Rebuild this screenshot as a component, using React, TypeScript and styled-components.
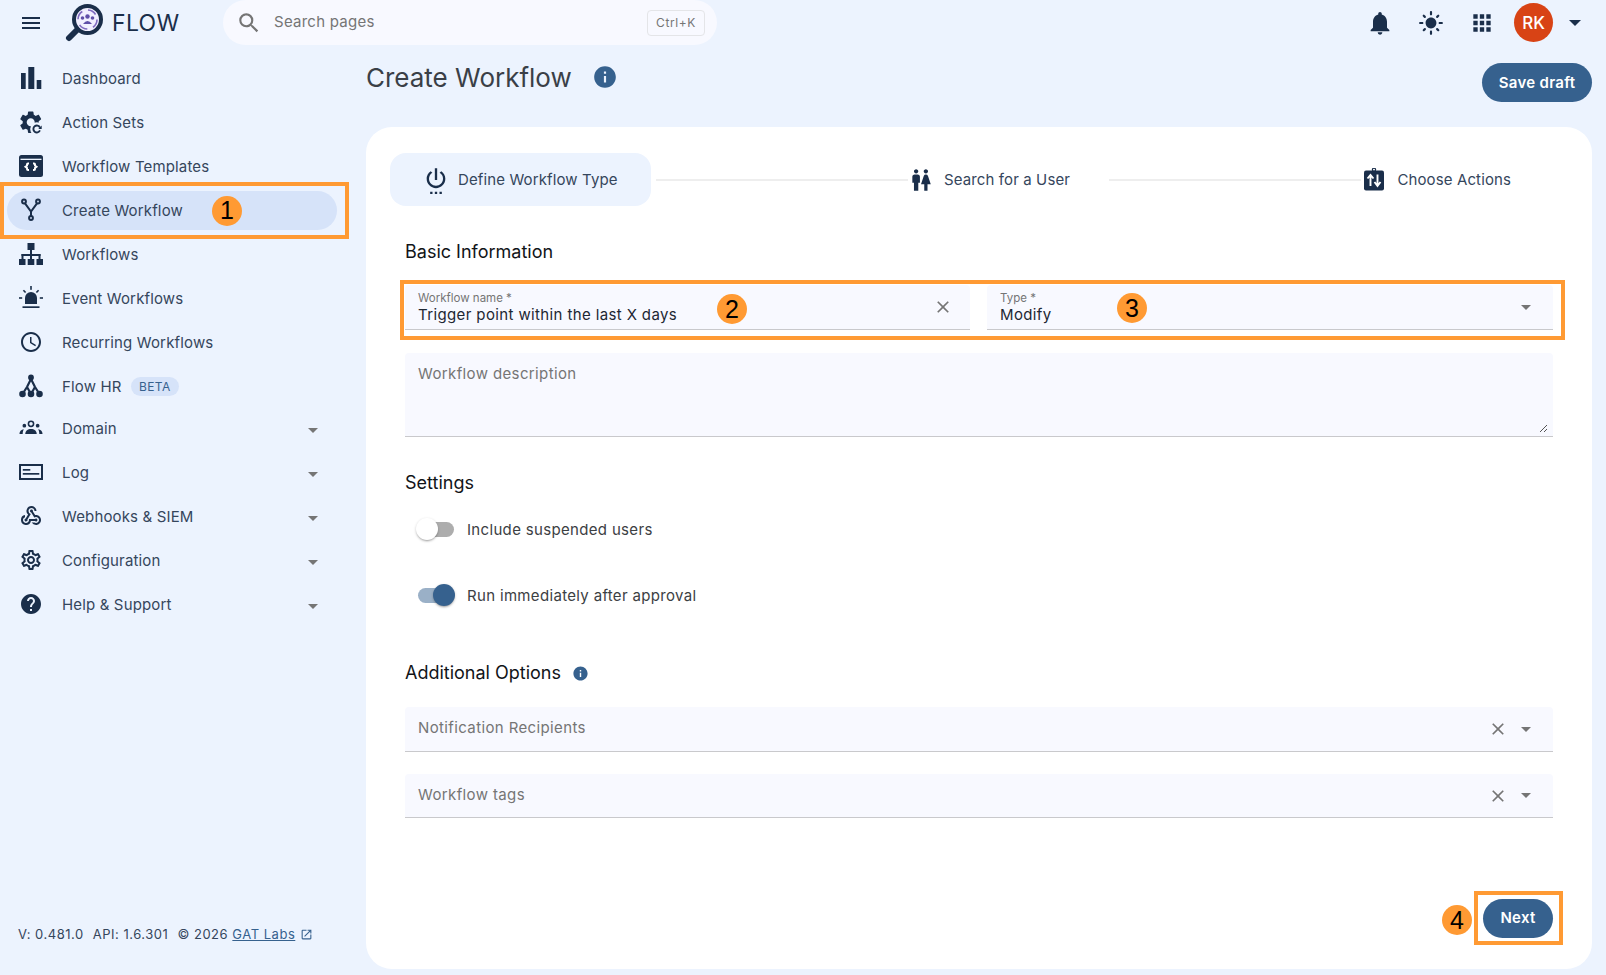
import React from "react";
import styled, { createGlobalStyle } from "styled-components";
import {
  MdAccessTime,
  MdApps,
  MdClose,
  MdHelp,
  MdInfo,
  MdLightMode,
  MdMenu,
  MdNotifications,
  MdOutlineOpenInNew,
  MdOutlineSettings,
  MdSearch,
  MdSettingsPower,
  MdWc,
  MdWebhook,
} from "react-icons/md";

const DARK = "#1a2e4a";
const BLUE = "#36618e";
const ORANGE = "#ff9a33";
const PAGE_BG = "#ecf3fe";
const FIELD_BG = "#f8f9ff";

const GlobalStyle = createGlobalStyle`
  html, body {
    margin: 0;
    height: 100%;
    background: ${PAGE_BG};
    font-family: Inter, "Liberation Sans", sans-serif;
    overflow: hidden;
  }
  * { box-sizing: border-box; }
`;

// ---- hand drawn icons ------------------------------------------------------

const LogoIcon = () => (
  <svg width="38" height="38" viewBox="0 0 38 38">
    <circle cx="22.5" cy="15.5" r="13.5" fill="#f1efff" stroke={DARK} strokeWidth="4" />
    <path d="M12 26 L4 34" stroke={DARK} strokeWidth="6" strokeLinecap="round" />
    <circle cx="22.5" cy="15.5" r="9.5" fill="none" stroke="#7f6bc0" strokeWidth="1.6" strokeDasharray="9 6" />
    <circle cx="22.5" cy="12.5" r="2.2" fill="#5f4ea8" />
    <circle cx="17.5" cy="14" r="1.8" fill="#5f4ea8" />
    <circle cx="27.5" cy="14" r="1.8" fill="#5f4ea8" />
    <path d="M18 20 q4.500 -6 9 0 z" fill="#5f4ea8" />
  </svg>
);

const BarsIcon = () => (
  <svg width="24" height="24" viewBox="0 0 24 24" fill="currentColor">
    <rect x="2" y="7" width="4.700" height="16" />
    <rect x="9.300" y="1" width="6" height="22" />
    <rect x="17.700" y="14" width="4.600" height="9" />
  </svg>
);

const ActionSetsIcon = () => (
  <svg width="24" height="24" viewBox="1.500 1 21.500 21.500" fill="currentColor">
    <path d="M19.140 12.940c.04-.3.06-.61.06-.94 0-.32-.02-.64-.07-.94l2.030-1.580c.18-.14.23-.41.12-.61l-1.920-3.320c-.12-.22-.37-.29-.59-.22l-2.390.96c-.5-.38-1.030-.7-1.620-.94l-.36-2.540c-.04-.24-.24-.41-.48-.41h-3.840c-.24 0-.43.17-.47.41l-.36 2.540c-.59.24-1.130.57-1.620.94l-2.390-.96c-.22-.08-.47 0-.59.22L2.740 8.870c-.12.21-.08.47.12.61l2.030 1.580c-.05.3-.09.63-.09.94s.02.64.07.94l-2.030 1.580c-.18.14-.23.41-.12.61l1.920 3.320c.12.22.37.29.59.22l2.390-.96c.5.38 1.030.7 1.620.94l.36 2.540c.05.24.24.41.48.41h3.840c.24 0 .44-.17.47-.41l.36-2.540c.59-.24 1.130-.56 1.620-.94l2.390.96c.22.08.47 0 .59-.22l1.920-3.320c.12-.22.07-.47-.12-.61l-2.010-1.580zM12 15.600c-1.980 0-3.600-1.620-3.600-3.600s1.620-3.600 3.600-3.600 3.600 1.620 3.600 3.600-1.620 3.600-3.600 3.600z" />
    <circle cx="17.500" cy="18" r="6" fill={PAGE_BG} />
    <path d="M20.300 19.300 A3.100 3.100 0 1 1 20.300 16.700" fill="none" stroke="currentColor" strokeWidth="1.700" />
    <path d="M21.800 14.800 V18 H18.800 Z" />
  </svg>
);

const TemplatesIcon = () => (
  <svg width="24" height="24" viewBox="0 0 24 24">
    <rect y="1" width="24" height="22" rx="2.500" fill="currentColor" />
    <rect x="1.500" y="4.700" width="21" height="1.300" fill={PAGE_BG} />
    <path
      d="M10 9.500 H9 a1 1 0 0 0 -1 1 v1 l-1.500 1.200 l1.500 1.200 v1 a1 1 0 0 0 1 1 h1 M14 9.500 h1 a1 1 0 0 1 1 1 v1 l1.500 1.200 l-1.500 1.200 v1 a1 1 0 0 1 -1 1 h-1"
      fill="none"
      stroke="#fff"
      strokeWidth="2"
    />
  </svg>
);

const ForkIcon = () => (
  <svg width="24" height="24" viewBox="0 0 24 24" fill="none" stroke="currentColor" strokeWidth="2">
    <circle cx="5" cy="3.500" r="1.900" />
    <circle cx="19" cy="3.500" r="1.900" />
    <circle cx="12" cy="20" r="1.900" />
    <path d="M6 5.300 L12 13.500 L18 5.300 M12 13.500 V18" />
  </svg>
);

const NetworkIcon = () => (
  <svg width="24" height="24" viewBox="0 0 24 24" fill="currentColor">
    <rect x="8.500" y="1" width="7" height="7" />
    <rect x="11" y="8" width="2" height="9" />
    <rect x="2.500" y="12" width="19" height="2" />
    <rect x="2.500" y="12" width="2" height="5" />
    <rect x="19.500" y="12" width="2" height="5" />
    <rect x="0" y="17" width="6.500" height="6" />
    <rect x="8.700" y="17" width="6.600" height="6" />
    <rect x="17.500" y="17" width="6.500" height="6" />
  </svg>
);

const SirenIcon = () => (
  <svg width="24" height="24" viewBox="0 0 24 24" fill="currentColor">
    <path d="M6 18 V12 a6 6 0 0 1 12 0 V18 Z" />
    <rect x="3.500" y="20.300" width="17" height="1.700" />
    <rect x="11.200" y="0" width="1.600" height="3.800" />
    <rect x="0" y="11.200" width="3.200" height="1.600" />
    <rect x="20.800" y="11.200" width="3.200" height="1.600" />
    <path d="M3.800 4.800 L5 3.700 L7.200 6 L6 7.100 Z M20.200 4.800 L19 3.700 L16.800 6 L18 7.100 Z" />
  </svg>
);

const TreeIcon = () => (
  <svg width="24" height="24" viewBox="0 0 24 24" fill="none" stroke="currentColor" strokeWidth="2.200">
    <circle cx="12" cy="3.500" r="1.800" fill="currentColor" />
    <circle cx="3.500" cy="20" r="2.200" fill="currentColor" />
    <circle cx="12" cy="20" r="2.200" fill="currentColor" />
    <circle cx="20.500" cy="20" r="2.200" fill="currentColor" />
    <path d="M12 5 L8 13 L3.500 20 M12 5 L16 13 L20.500 20 M8 13 L12 20 M16 13 L12 20" />
  </svg>
);

const TeamIcon = () => (
  <svg width="26" height="24" viewBox="-1 0 26 24" fill="currentColor">
    <circle cx="12" cy="7.500" r="2.800" fill="none" stroke="currentColor" strokeWidth="1.700" />
    <circle cx="4.800" cy="9.500" r="2" />
    <circle cx="19.200" cy="9.500" r="2" />
    <path d="M5.800 18.500 C5.800 15 8.500 13 12 13 S18.200 15 18.200 18.500 Z" />
    <path d="M-0.500 18.500 C-0.500 15.500 1.200 13.500 4.300 13.300 C3.300 14.800 3 16.500 3 18.500 Z" />
    <path d="M24.500 18.500 C24.500 15.500 22.800 13.500 19.700 13.300 C20.700 14.800 21 16.500 21 18.500 Z" />
  </svg>
);

const LogIcon = () => (
  <svg width="24" height="24" viewBox="0 0 24 24">
    <rect x="1" y="5" width="22" height="14" fill="none" stroke="currentColor" strokeWidth="2" />
    <rect x="3.800" y="9" width="7.500" height="1.700" fill="currentColor" />
    <rect x="3.800" y="13" width="16.500" height="1.700" fill="currentColor" />
  </svg>
);

const ClipboardSwapIcon = () => (
  <svg width="26" height="24" viewBox="-1 0 26 24">
    <rect x="2" y="2.500" width="20" height="20" rx="2" fill="currentColor" />
    <circle cx="12" cy="1.800" r="1.600" fill="none" stroke="currentColor" strokeWidth="1.200" />
    <path d="M8.500 18 V8 M5.500 10.500 L8.500 7 L11.500 10.500 M15.500 6.500 V17 M12.500 14 L15.500 18 L18.500 14" fill="none" stroke="#fff" strokeWidth="1.900" />
  </svg>
);

// ---- frame -----------------------------------------------------------------

const Page = styled.div`
  display: flex;
  flex-direction: column;
  width: 1606px;
  height: 975px;
  background: ${PAGE_BG};
`;

const TopBar = styled.header`
  display: flex;
  align-items: center;
  flex: none;
  height: 45px;
  padding: 0 25px 0 19px;
  color: ${DARK};
`;

const Brand = styled.div`
  display: flex;
  align-items: center;
  margin-left: 22px;
  width: 158px;
  font-size: 23px;
  letter-spacing: 0.015em;
  svg {
    margin-top: 1px;
    margin-right: 9px;
  }
`;

const SearchBox = styled.div`
  display: flex;
  align-items: center;
  width: 494px;
  height: 45px;
  padding: 0 12px 0 13px;
  border-radius: 23px;
  background: ${FIELD_BG};
  color: #757575;
  font-size: 15px;
  letter-spacing: 0.017em;
`;

const SearchLabel = styled.span`
  flex: 1;
  margin-left: 12px;
  margin-top: -2px;
`;

const Kbd = styled.span`
  display: flex;
  align-items: center;
  justify-content: center;
  width: 58px;
  height: 26px;
  border: 1px solid #e4e5e8;
  border-radius: 4px;
  font-size: 12px;
  letter-spacing: 0.05em;
`;

const TopActions = styled.div`
  display: flex;
  align-items: center;
  gap: 25px;
  margin-left: auto;
`;

const BellSlot = styled.span`
  display: flex;
  margin-right: -1px;
`;

const Avatar = styled.div`
  display: flex;
  align-items: center;
  justify-content: center;
  width: 39px;
  height: 39px;
  margin-left: -6px;
  margin-right: -9px;
  border-radius: 50%;
  background: #d84315;
  color: #fff;
  font-size: 17px;
  font-weight: 500;
`;

const Caret = styled.span<{ $dark?: boolean; $wide?: boolean }>`
  flex: none;
  width: 0;
  height: 0;
  border-style: solid;
  border-color: ${p => (p.$dark ? DARK : "#757575")} transparent transparent;
  border-width: ${p => (p.$wide ? "6px 6px 0" : "5.500px 5.500px 0")};
`;

const Body = styled.div`
  display: flex;
  flex: 1;
  min-height: 0;
`;

// ---- sidebar ---------------------------------------------------------------

const Sidebar = styled.nav`
  display: flex;
  flex-direction: column;
  flex: none;
  width: 366px;
  padding: 11px 29px 33px 7px;
`;

const NavItem = styled.div<{ $active?: boolean; $tight?: boolean }>`
  position: relative;
  display: flex;
  align-items: center;
  flex: none;
  height: 39px;
  margin: ${p => (p.$tight ? "0.500px" : "2.500px")} 0 2.500px;
  padding: 0 19px 0 12px;
  border-radius: 20px;
  background: ${p => (p.$active ? "#d6e3f9" : "transparent")};
  color: ${DARK};
`;

const NavIcon = styled.span`
  display: flex;
  justify-content: center;
  flex: none;
  width: 24px;
  font-size: 26px;
`;

const NavLabel = styled.span`
  margin-left: 19px;
  color: #35465c;
  font-size: 15px;
  letter-spacing: 0.01em;
`;

const BetaTag = styled.span`
  margin-left: 9px;
  padding: 0 8.500px;
  height: 19px;
  line-height: 19px;
  border-radius: 10px;
  background: #d6e3f9;
  color: ${BLUE};
  font-size: 12px;
  letter-spacing: 0.03em;
`;

const NavCaret = styled.span`
  display: flex;
  margin-left: auto;
  margin-top: 4px;
`;

const SidebarFooter = styled.div`
  display: flex;
  align-items: center;
  margin: auto 0 0 11px;
  color: #35465c;
  font-size: 13px;
  letter-spacing: 0.04em;
`;

const FooterPart = styled.span`
  margin-right: 9px;
`;

const FooterLink = styled.a`
  color: ${BLUE};
  text-decoration: underline;
`;

const ExternalIcon = styled.span`
  display: flex;
  margin-left: 5px;
  color: ${BLUE};
  font-size: 13px;
`;

// ---- main ------------------------------------------------------------------

const Main = styled.main`
  display: flex;
  flex-direction: column;
  flex: 1;
  min-width: 0;
  padding: 0 14px 6px 0;
`;

const PageHeader = styled.div`
  display: flex;
  align-items: flex-start;
  flex: none;
  height: 82px;
`;

const PageTitle = styled.h1`
  margin: 16px 0 0;
  color: #3a3f47;
  font-size: 26px;
  font-weight: 400;
  line-height: 34px;
`;

const InfoButton = styled.span<{ $size: number; $gap: number; $top?: number }>`
  display: flex;
  color: ${BLUE};
  font-size: ${p => p.$size}px;
  margin-left: ${p => p.$gap}px;
  margin-top: ${p => p.$top ?? 0}px;
`;

const PillButton = styled.button<{ $width: number }>`
  flex: none;
  width: ${p => p.$width}px;
  height: 39px;
  padding: 0;
  border: 0;
  border-radius: 20px;
  background: ${BLUE};
  color: #fff;
  font-family: inherit;
  font-size: 15px;
  font-weight: 600;
  letter-spacing: 0.02em;
`;

const SaveDraft = styled(PillButton)`
  margin: 18px 0 0 auto;
`;

const NextButton = styled(PillButton)`
  padding-bottom: 2px;
`;

const Card = styled.section`
  display: flex;
  flex-direction: column;
  flex: 1;
  padding: 26px 39px 31px 24px;
  border-radius: 26px;
  background: #fff;
`;

const Stepper = styled.div`
  display: flex;
  align-items: center;
  flex: none;
  padding-right: 3px;
`;

const StepLine = styled.span`
  flex: 1;
  height: 2px;
  background: #eeeeee;
`;

const Step = styled.div<{ $active?: boolean }>`
  display: flex;
  align-items: center;
  gap: ${p => (p.$active ? 8 : 10)}px;
  height: 53px;
  margin-right: ${p => (p.$active ? 5 : 0)}px;
  padding: ${p => (p.$active ? "0 33px 0 32px" : "0 39px 0 0")};
  border-radius: 16px;
  background: ${p => (p.$active ? PAGE_BG : "transparent")};
  color: ${DARK};
  svg {
    flex: none;
  }
`;

const StepLabel = styled.span`
  color: #35465c;
  font-size: 15px;
  letter-spacing: 0.008em;
`;

const Form = styled.div`
  display: flex;
  flex-direction: column;
  flex: 1;
  margin-left: 15px;
`;

const SectionTitle = styled.h2<{ $top: number }>`
  display: flex;
  align-items: center;
  margin: ${p => p.$top}px 0 0;
  color: #111418;
  font-size: 18px;
  font-weight: 400;
  line-height: 24px;
`;

const FieldRow = styled.div`
  position: relative;
  display: grid;
  grid-template-columns: 565px 566px;
  gap: 17px;
  height: 45px;
  margin-top: 21px;
`;

const Field = styled.div<{ $height?: number; $top?: number }>`
  position: relative;
  display: flex;
  align-items: center;
  height: ${p => p.$height ?? 45}px;
  margin-top: ${p => p.$top ?? 0}px;
  padding: 0 22px 0 13px;
  border-bottom: 1px solid #c9c9cc;
  border-radius: 4px 4px 0 0;
  background: ${FIELD_BG};
  color: #757575;
  font-size: 15px;
  letter-spacing: 0.025em;
`;

const FieldText = styled.div<{ $raise?: number }>`
  flex: 1;
  min-width: 0;
  margin-top: ${p => -(p.$raise ?? 0)}px;
`;

const FieldLabel = styled.div`
  font-size: 11.500px;
  line-height: 14px;
  letter-spacing: 0;
`;

const FieldValue = styled.div`
  color: #1d2733;
  line-height: 19px;
`;

const FieldIcon = styled.span<{ $end?: number }>`
  display: flex;
  color: #757575;
  font-size: 20px;
  margin-right: ${p => p.$end ?? 13.5}px;
`;

const TextArea = styled(Field)`
  align-items: flex-start;
  padding-top: 11px;
`;

const Resize = styled.svg`
  position: absolute;
  right: 5px;
  bottom: 3px;
`;

const SwitchRow = styled.label<{ $top: number }>`
  display: flex;
  align-items: center;
  height: 38px;
  margin-top: ${p => p.$top}px;
  margin-left: 13px;
  color: #3c4043;
  font-size: 15px;
  letter-spacing: 0.022em;
`;

const SwitchTrack = styled.span<{ $on?: boolean }>`
  position: relative;
  flex: none;
  width: 36px;
  height: 15px;
  margin-right: 13px;
  border-radius: 8px;
  background: ${p => (p.$on ? "#9ab0c7" : "#adadad")};
`;

const SwitchThumb = styled.span<{ $on?: boolean }>`
  position: absolute;
  top: -4px;
  left: ${p => (p.$on ? "15px" : "-2px")};
  width: 22px;
  height: 22px;
  border-radius: 50%;
  background: ${p => (p.$on ? BLUE : "#fff")};
  box-shadow: 0 2px 2px -1px rgba(0, 0, 0, 0.25), 0 1px 3px rgba(0, 0, 0, 0.2);
`;

const NextRow = styled.div`
  display: flex;
  justify-content: flex-end;
  margin-top: auto;
`;

const NextSlot = styled.div`
  position: relative;
  display: flex;
`;

// ---- annotations laid over the screenshot ---------------------------------

const Frame = styled.span<{ $inset: string }>`
  position: absolute;
  inset: ${p => p.$inset};
  border: 4px solid ${ORANGE};
  pointer-events: none;
`;

const Badge = styled.span<{ $left: number; $top: number }>`
  position: absolute;
  left: ${p => p.$left}px;
  top: ${p => p.$top}px;
  display: flex;
  align-items: center;
  justify-content: center;
  width: 30px;
  height: 30px;
  border-radius: 50%;
  background: ${ORANGE};
  color: #000;
  font-family: "Liberation Sans", Arial, sans-serif;
  font-size: 25px;
  letter-spacing: 0;
`;

const navItems: {
  label: string;
  icon: React.ReactNode;
  expandable?: boolean;
  beta?: boolean;
  active?: boolean;
}[] = [
  { label: "Dashboard", icon: <BarsIcon /> },
  { label: "Action Sets", icon: <ActionSetsIcon /> },
  { label: "Workflow Templates", icon: <TemplatesIcon /> },
  { label: "Create Workflow", icon: <ForkIcon />, active: true },
  { label: "Workflows", icon: <NetworkIcon /> },
  { label: "Event Workflows", icon: <SirenIcon /> },
  { label: "Recurring Workflows", icon: <MdAccessTime /> },
  { label: "Flow HR", icon: <TreeIcon />, beta: true },
  { label: "Domain", icon: <TeamIcon />, expandable: true },
  { label: "Log", icon: <LogIcon />, expandable: true },
  { label: "Webhooks & SIEM", icon: <MdWebhook />, expandable: true },
  { label: "Configuration", icon: <MdOutlineSettings />, expandable: true },
  { label: "Help & Support", icon: <MdHelp />, expandable: true },
];

export default function App() {
  return (
    <Page>
      <GlobalStyle />
      <TopBar>
        <MdMenu size={24} />
        <Brand>
          <LogoIcon />
          FLOW
        </Brand>
        <SearchBox>
          <MdSearch size={26} />
          <SearchLabel>Search pages</SearchLabel>
          <Kbd>Ctrl+K</Kbd>
        </SearchBox>
        <TopActions>
          <BellSlot>
            <MdNotifications size={28} />
          </BellSlot>
          <MdLightMode size={26} />
          <MdApps size={26} />
          <Avatar>RK</Avatar>
          <Caret $dark $wide />
        </TopActions>
      </TopBar>

      <Body>
        <Sidebar>
          {navItems.map(item => (
            <NavItem key={item.label} $active={item.active} $tight={item.label === "Domain"}>
              <NavIcon>{item.icon}</NavIcon>
              <NavLabel>{item.label}</NavLabel>
              {item.beta && <BetaTag>BETA</BetaTag>}
              {item.expandable && (
                <NavCaret>
                  <Caret />
                </NavCaret>
              )}
              {item.active && (
                <>
                  <Frame $inset="-9px -12px -9px -7px" />
                  <Badge $left={205} $top={5}>
                    1
                  </Badge>
                </>
              )}
            </NavItem>
          ))}
          <SidebarFooter>
            <FooterPart>V: 0.481.0</FooterPart>
            <FooterPart>API: 1.6.301</FooterPart>
            <span>
              © 2026 <FooterLink>GAT Labs</FooterLink>
            </span>
            <ExternalIcon>
              <MdOutlineOpenInNew />
            </ExternalIcon>
          </SidebarFooter>
        </Sidebar>

        <Main>
          <PageHeader>
            <PageTitle>Create Workflow</PageTitle>
            <InfoButton $size={26} $gap={20} $top={19}>
              <MdInfo />
            </InfoButton>
            <SaveDraft $width={110}>Save draft</SaveDraft>
          </PageHeader>

          <Card>
            <Stepper>
              <Step $active>
                <MdSettingsPower size={28} />
                <StepLabel>Define Workflow Type</StepLabel>
              </Step>
              <StepLine />
              <Step>
                <MdWc size={26} />
                <StepLabel>Search for a User</StepLabel>
              </Step>
              <StepLine />
              <Step>
                <ClipboardSwapIcon />
                <StepLabel>Choose Actions</StepLabel>
              </Step>
            </Stepper>

            <Form>
              <SectionTitle $top={34}>Basic Information</SectionTitle>
              <FieldRow>
                <Field>
                  <FieldText>
                    <FieldLabel>Workflow name *</FieldLabel>
                    <FieldValue>Trigger point within the last X days</FieldValue>
                  </FieldText>
                  <FieldIcon $end={-5}>
                    <MdClose />
                  </FieldIcon>
                </Field>
                <Field>
                  <FieldText>
                    <FieldLabel>Type *</FieldLabel>
                    <FieldValue>Modify</FieldValue>
                  </FieldText>
                  <Caret />
                </Field>
                <Frame $inset="-5px -12px -10px -5px" />
                <Badge $left={312} $top={9}>
                  2
                </Badge>
                <Badge $left={712} $top={8}>
                  3
                </Badge>
              </FieldRow>

              <TextArea $height={84} $top={23}>
                Workflow description
                <Resize width="10" height="10" viewBox="0 0 10 10">
                  <path d="M9 2 L2 9 M9 6 L6 9" stroke="#555" strokeWidth="1" />
                </Resize>
              </TextArea>

              <SectionTitle $top={34}>Settings</SectionTitle>
              <SwitchRow $top={15}>
                <SwitchTrack>
                  <SwitchThumb />
                </SwitchTrack>
                Include suspended users
              </SwitchRow>
              <SwitchRow $top={28}>
                <SwitchTrack $on>
                  <SwitchThumb $on />
                </SwitchTrack>
                Run immediately after approval
              </SwitchRow>

              <SectionTitle $top={47}>
                Additional Options
                <InfoButton $size={17} $gap={11}>
                  <MdInfo />
                </InfoButton>
              </SectionTitle>

              <Field $top={22}>
                <FieldText $raise={3}>Notification Recipients</FieldText>
                <FieldIcon>
                  <MdClose />
                </FieldIcon>
                <Caret />
              </Field>
              <Field $height={44} $top={22}>
                <FieldText $raise={2}>Workflow tags</FieldText>
                <FieldIcon>
                  <MdClose />
                </FieldIcon>
                <Caret />
              </Field>

              <NextRow>
                <NextSlot>
                  <NextButton $width={70}>Next</NextButton>
                  <Frame $inset="-8px -10px -7px -9px" />
                  <Badge $left={-41} $top={6}>
                    4
                  </Badge>
                </NextSlot>
              </NextRow>
            </Form>
          </Card>
        </Main>
      </Body>
    </Page>
  );
}
